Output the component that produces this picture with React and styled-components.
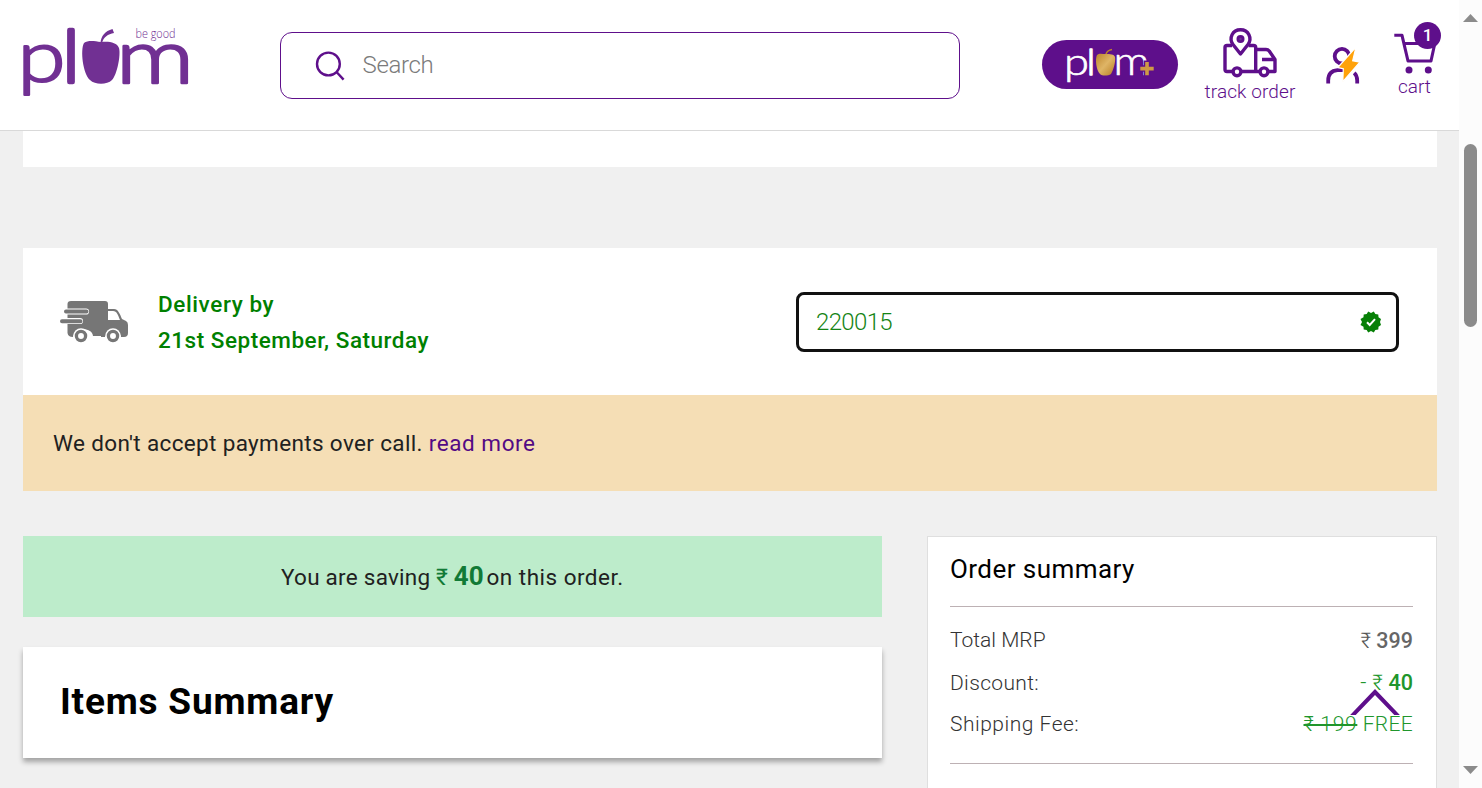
import React from "react";
import styled, { createGlobalStyle } from "styled-components";

const purple = "#5e0f8b";

const Global = createGlobalStyle`
  * { box-sizing: border-box; }
  body { margin: 0; background: #f0f0f0; overflow: hidden; font-family: Roboto, "Liberation Sans", sans-serif; }
`;
const Screen = styled.div`display: flex; width: 1482px; height: 788px; overflow: hidden;`;
const Page = styled.div`position: relative; width: 1459px; height: 788px; overflow: hidden;`;
const Header = styled.header`
  display: flex; align-items: flex-start; height: 131px; padding-left: 23px;
  background: #fff; border-bottom: 1px solid #d9d9d9;
`;
const Brand = styled.svg`width: 170px; height: 72px; margin-top: 26px; display: block; flex: none; overflow: visible;`;
const SearchBox = styled.div`
  display: flex; align-items: center; width: 680px; height: 67px; margin: 32px 0 0 87px;
  padding: 0 0 2px 33px; gap: 16.5px; border: 1px solid ${purple}; border-radius: 12px; flex: none;
`;
const Label = styled.span`
  font-size: ${p => p.$size}px; font-weight: ${p => p.$weight || 400}; color: ${p => p.$color || "#212121"};
  letter-spacing: ${p => p.$track || 0}px; white-space: pre; line-height: ${p => p.$line || "normal"};
  margin-left: ${p => p.$gap || 0}px;
  text-decoration: ${p => p.$struck ? "line-through 2px" : "none"};
`;
const Pill = styled.div`
  width: 136px; height: 49px; margin: 40px 0 0 82px; border-radius: 25px; background: ${purple}; flex: none;
`;
const NavItem = styled.div`
  position: relative; display: flex; flex-direction: column; align-items: center; flex: none;
  width: ${p => p.$width}px; margin: ${p => p.$top}px 0 0 ${p => p.$left}px;
`;
const Icon = styled.svg`display: block; flex: none; overflow: visible;`;
const Badge = styled.span`
  position: absolute; top: -10px; right: -4px; width: 27px; height: 27px; border-radius: 50%;
  background: ${purple}; color: #fff; font-size: 17px; font-weight: 500; line-height: 27px; text-align: center;
`;
const Main = styled.main`padding: 0 22px 0 23px;`;
const Strip = styled.div`height: 36px; background: #fff; margin-bottom: 81px;`;
const Delivery = styled.section`
  display: flex; align-items: center; height: 147px; padding: 0 38px 0 37px; background: #fff;
`;
const Dates = styled.div`display: flex; flex-direction: column; margin-left: 30px; flex: 1;`;
const PinInput = styled.div`
  display: flex; align-items: center; justify-content: space-between; width: 603px; height: 60px;
  margin-top: 1px; padding: 0 14px 0 17px; border: 3px solid #111; border-radius: 8px;
`;
const Notice = styled.section`
  display: flex; align-items: center; height: 96px; padding-left: 30px; background: #f5deb5;
`;
const Columns = styled.div`display: flex; gap: 45px; margin-top: 45px;`;
const Left = styled.div`width: 859px;`;
const Saving = styled.div`
  display: flex; align-items: baseline; height: 81px; padding: 25px 0 0 258px; background: #bdeccb;
`;
const Items = styled.section`
  display: flex; align-items: center; height: 111px; margin-top: 30px; padding: 0 0 2px 37px;
  background: #fff; box-shadow: 0 4px 5px rgba(0,0,0,.32);
`;
const Summary = styled.section`
  width: 510px; height: 300px; padding: 0 23px 0 22px; background: #fff; border: 1px solid #dfdfdf;
`;
const SummaryHead = styled.div`height: 70px; border-bottom: 1px solid #bdb1b4; margin-bottom: 13px;`;
const Row = styled.div`
  display: flex; align-items: center; justify-content: space-between; height: ${p => p.$height}px;
`;
const Rule = styled.div`height: 1px; background: #bdb1b4; margin-top: 20px;`;
const ToTop = styled.svg`position: absolute; left: 1349px; top: 689px;`;
const Scrollbar = styled.div`
  display: flex; flex-direction: column; align-items: center; justify-content: space-between;
  width: 23px; height: 788px; padding: 14px 0; background: #fcfcfc;
`;
const Thumb = styled.div`width: 13px; height: 183px; border-radius: 7px; background: #8b8b8b; margin: 122px 0 auto;`;

const Logo = () => (
  <Brand viewBox="23 26 170 72" fill="#713093">
    <g fontFamily="Lato, sans-serif" fontWeight="300" stroke="#713093" strokeLinejoin="round">
      <text x="17.5" y="82" fontSize="72" strokeWidth="2.2" textLength="48" lengthAdjust="spacingAndGlyphs">p</text>
      <text x="63.2" y="82" fontSize="70" strokeWidth="4.4">l</text>
      <text x="116" y="82.5" fontSize="75" strokeWidth="2.4" textLength="78" lengthAdjust="spacingAndGlyphs">m</text>
    </g>
    <path d="M84 43C88 40 94 41 101 42C108 41 117 42 119 48C121 55 117 75 112 80C107 85 95 85 90 80C83 74 80 50 84 43Z" />
    <path d="M100.5 43C101 36 105 31 112.5 29L114 33C108 34 103.5 37 102 43Z" />
    <text x="135.5" y="38" fontFamily="Open Sans" fontWeight="300" fontSize="12" textLength="40" lengthAdjust="spacingAndGlyphs">be good</text>
  </Brand>
);

const PlusLogo = () => (
  <Icon width="136" height="49" viewBox="1042 40 136 49">
    <defs><linearGradient id="gold" x1="0" y1="0" x2="1" y2="1">
      <stop offset="0" stopColor="#bd842c" /><stop offset=".5" stopColor="#dfb566" /><stop offset="1" stopColor="#b77c23" />
    </linearGradient></defs>
    <g fontFamily="Lato, sans-serif" fontWeight="300" fill="#fff" stroke="#fff" strokeWidth=".7" strokeLinejoin="round">
      <text x="1064" y="75" fontSize="38" textLength="25" lengthAdjust="spacingAndGlyphs">p</text>
      <text x="1087" y="75" fontSize="36" strokeWidth="1.6">l</text>
      <text x="1113.5" y="75" fontSize="39" textLength="36" lengthAdjust="spacingAndGlyphs">m</text>
    </g>
    <path fill="url(#gold)" d="M1097 55C1099 53 1102 54 1106 54C1110 54 1114 54 1115 57C1116 62 1113 71 1111 74C1108 76 1102 76 1100 74C1096 70 1095 59 1097 55Z" />
    <path d="M1106 54C1107 51 1109 50 1112 49.5" fill="none" stroke="#bd842c" strokeWidth="1.5" />
    <path d="M1147 60.5V76.5M1139.5 68.5H1155" stroke={purple} strokeWidth="6.5" />
    <path d="M1147 62V75.3M1140.3 68.6H1153.7" stroke="#cf9a45" strokeWidth="3.6" />
  </Icon>
);

const SearchIcon = () => (
  <Icon width="32" height="32" viewBox="314 49 32 32" fill="none" stroke={purple} strokeWidth="2.4">
    <circle cx="328.4" cy="64" r="11.4" /><path d="M336.5 72L343.6 79.6" />
  </Icon>
);

const TrackIcon = () => (
  <Icon width="56" height="50" viewBox="1222 28 56 50" fill="none" stroke={purple} strokeWidth="3.4" strokeLinejoin="round">
    <path d="M1232 45.5H1227Q1225 45.5 1225 47.5V69.5Q1225 71.5 1227 71.5H1232M1242 71.5H1259M1248.5 45.5H1253.5Q1255.7 45.5 1255.7 47.5V71.5" />
    <path d="M1257 49.5H1266Q1268 49.5 1269.2 51L1275 59.5V71.5H1269M1275 59.5H1262" />
    <path d="M1240.5 54L1233 44.5C1228.5 38 1232.5 29.8 1240.5 29.8S1252.5 38 1248 44.5Z" />
    <circle cx="1240.5" cy="39" r="4" fill={purple} stroke="none" />
    <circle cx="1240.5" cy="39" r="1.2" fill="#6f3a91" stroke="none" />
    <circle cx="1237" cy="71.8" r="3.9" fill="#fff" /><circle cx="1264" cy="71.8" r="3.9" fill="#fff" />
  </Icon>
);

const AccountIcon = () => (
  <Icon width="34" height="38" viewBox="1326 46 34 38">
    <g fill="none" stroke={purple} strokeWidth="3.8">
      <circle cx="1342" cy="56.2" r="7.3" />
      <path d="M1328.2 83.5V80.5C1328.2 74 1331.5 70.7 1337.5 70.2H1345M1354.2 72.8C1356.4 74.8 1357.2 77 1357.2 80.5V83.5" />
    </g>
    <path d="M1356 47L1337.8 67.5L1343.3 68.8L1342.8 81.7L1359.8 62.2L1352.7 60.7Z" fill="#ffa20a" stroke="#fff" strokeWidth="1.2" />
  </Icon>
);

const CartIcon = () => (
  <Icon width="43" height="43" viewBox="1394 32 43 43" fill="none" stroke={purple} strokeWidth="3.1" strokeLinejoin="round">
    <path d="M1394.3 35.3H1402L1408 61H1431L1434.8 43.5H1404" />
    <circle cx="1409" cy="70" r="3.5" fill={purple} stroke="none" /><circle cx="1428.3" cy="70" r="3.5" fill={purple} stroke="none" />
  </Icon>
);

const DeliveryIcon = () => (
  <Icon width="68" height="42" viewBox="60 301 68 42" fill="#767676">
    <path d="M71 301H105Q108 301 108 304V336H93C92 327 75 327 73 337Q68 337 67.5 333V304Q67.5 301 71 301Z" />
    <path fillRule="evenodd" d="M107 309H114C118 309 120 314 122 319L126 321Q128 322 128 325V333Q128 337 124 337H121C119 327 107 327 105 337H101V327H107ZM108 311V320H120C118 315 117 311 113 311Z" />
    <g stroke="#fff" strokeWidth="6.2" strokeLinecap="round"><path d="M66 311.5H86M63 321H80" /></g>
    <g stroke="#767676" strokeWidth="4" strokeLinecap="round"><path d="M66 311.5H86.5M62 321.3H80.5" /></g>
    {[81, 113].map(x => <g key={x}><circle cx={x} cy="336" r="7.8" fill="#fff" /><circle cx={x} cy="336" r="4.6" fill="#fff" stroke="#767676" strokeWidth="3.3" /></g>)}
  </Icon>
);

const VerifiedIcon = () => (
  <Icon width="22" height="22" viewBox="0 0 22 22">
    <path fill="#078007" d="M11 2L13.8.5L15.3 3L18.3 3.4L18.5 6.3L21 8L20 11L21 14L18.5 15.7L18.3 18.6L15.3 19L13.8 21.5L11 20L8.2 21.5L6.7 19L3.7 18.6L3.5 15.7L.5 14L2 11L.5 8L3.5 6.3L3.7 3.4L6.7 3L8.2.5Z" />
    <path d="M7 11.3L9.7 14L15 8.2" fill="none" stroke="#fff" strokeWidth="2" />
  </Icon>
);

export default function App() {
  return (
    <><Global /><Screen>
      <Page>
        <Header>
          <Logo />
          <SearchBox><SearchIcon /><Label $size={24} $weight={300} $color="#7b7b7b" $track={-0.35}>Search</Label></SearchBox>
          <Pill><PlusLogo /></Pill>
          <NavItem $width={92} $top={28} $left={26}>
            <TrackIcon /><Label $size={19} $weight={300} $color={purple} $line="27px" $track={0.1}>track order</Label>
          </NavItem>
          <NavItem $width={34} $top={46} $left={30}><AccountIcon /></NavItem>
          <NavItem $width={43} $top={32} $left={34}>
            <CartIcon /><Badge>1</Badge><Label $size={19} $weight={300} $color={purple} $line="24px" $gap={-2}>cart</Label>
          </NavItem>
        </Header>
        <Main>
          <Strip />
          <Delivery>
            <DeliveryIcon />
            <Dates>
              <Label $size={22.5} $weight={500} $color="#008000" $track={0.6} $line="36px">Delivery by</Label>
              <Label $size={22.5} $weight={500} $color="#008000" $track={0.52} $line="36px">21st September, Saturday</Label>
            </Dates>
            <PinInput><Label $size={24} $weight={300} $color="#158415" $track={-0.65}>220015</Label><VerifiedIcon /></PinInput>
          </Delivery>
          <Notice>
            <Label $size={22.5} $track={0.35}>We don't accept payments over call. </Label>
            <Label $size={22.5} $track={0.55} $color="#530a84">read more</Label>
          </Notice>
          <Columns>
            <Left>
              <Saving>
                <Label $size={22.5} $track={0.25}>You are saving</Label>
                <Label $size={23} $color="#117a36"> ₹ </Label>
                <Label $size={26} $weight={700} $color="#117a36">40</Label>
                <Label $size={22.5} $track={0.48} $gap={3}>on this order.</Label>
              </Saving>
              <Items><Label $size={37} $weight={700} $color="#000" $track={0.8}>Items Summary</Label></Items>
            </Left>
            <Summary>
              <SummaryHead><Label $size={26} $color="#000" $line="65px" $track={0.45}>Order summary</Label></SummaryHead>
              <Row $height={40}>
                <Label $size={21} $weight={300} $color="#333">Total MRP</Label>
                <span><Label $size={21.5} $weight={300} $color="#555">₹ </Label><Label $size={21.5} $weight={500} $color="#666">399</Label></span>
              </Row>
              <Row $height={45}>
                <Label $size={21} $weight={300} $color="#333" $track={0.35}>Discount:</Label>
                <span><Label $size={21.5} $weight={300} $color="#20962c" $track={0.3}>- ₹ </Label><Label $size={21.5} $weight={500} $color="#20962c">40</Label></span>
              </Row>
              <Row $height={38}>
                <Label $size={21} $weight={300} $color="#333" $track={0.5}>Shipping Fee:</Label>
                <span><Label $size={21} $weight={300} $color="#20962c" $track={0.7} $struck>₹ 199</Label><Label $size={21} $weight={300} $color="#20962c" $track={0.3}> FREE</Label></span>
              </Row>
              <Rule />
            </Summary>
          </Columns>
        </Main>
        <ToTop width="52" height="26"><path d="M2 28L26 3L50 28" fill="none" stroke={purple} strokeWidth="4" /></ToTop>
      </Page>
      <Scrollbar>
        <Icon width="15" height="8"><path d="M0 8L7.5 0L15 8Z" fill="#8b8b8b" /></Icon>
        <Thumb />
        <Icon width="15" height="8"><path d="M0 0H15L7.5 8Z" fill="#8b8b8b" /></Icon>
      </Scrollbar>
    </Screen></>
  );
}
